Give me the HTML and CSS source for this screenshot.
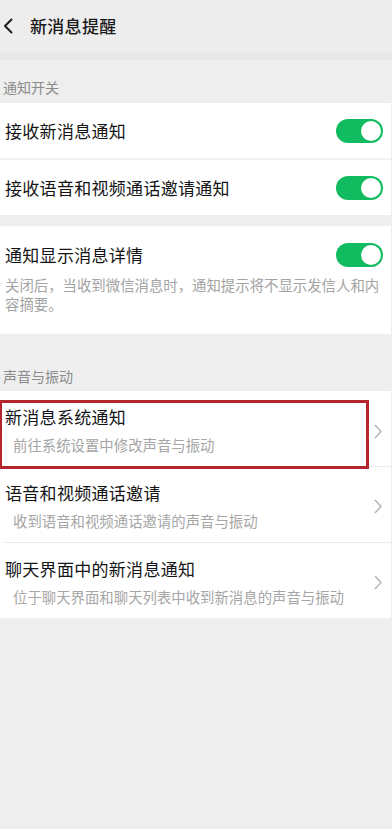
FILE: index.html
```html
<!DOCTYPE html>
<html lang="zh-CN">
<head>
<meta charset="utf-8">
<meta name="viewport" content="width=device-width, initial-scale=1">
<title>新消息提醒</title>
<link rel="stylesheet" href="styles.css">
</head>
<body>
<header class="topbar">
  <svg class="back" width="12" height="16" viewBox="0 0 12 16" aria-hidden="true"><path d="M9.5 1.5 L3 8 L9.5 14.5" fill="none" stroke="#1f1f1f" stroke-width="2" stroke-linecap="round" stroke-linejoin="round"/></svg>
  <h1 class="title">新消息提醒</h1>
</header>
<div class="band"></div>

<div class="section-label first">通知开关</div>
<section class="card">
  <div class="switch-row">
    <span class="row-title">接收新消息通知</span>
    <span class="toggle"><span class="knob"></span></span>
  </div>
  <div class="switch-row second">
    <span class="row-title">接收语音和视频通话邀请通知</span>
    <span class="toggle"><span class="knob"></span></span>
  </div>
</section>

<section class="card detail-card">
  <div class="detail-head">
    <span class="row-title">通知显示消息详情</span>
    <span class="toggle"><span class="knob"></span></span>
  </div>
  <p class="detail-desc">关闭后，当收到微信消息时，通知提示将不显示发信人和内容摘要。</p>
</section>

<div class="section-label second-label">声音与振动</div>
<section class="card nav-card">
  <div class="nav-row">
    <div class="nav-text">
      <div class="row-title">新消息系统通知</div>
      <div class="row-sub">前往系统设置中修改声音与振动</div>
    </div>
    <svg class="chev" width="8" height="15" viewBox="0 0 8 15" aria-hidden="true"><path d="M1 1 L7 7.5 L1 14" fill="none" stroke="#b3b3b3" stroke-width="1.4" stroke-linejoin="round"/></svg>
  </div>
  <div class="nav-row">
    <div class="nav-text">
      <div class="row-title">语音和视频通话邀请</div>
      <div class="row-sub">收到语音和视频通话邀请的声音与振动</div>
    </div>
    <svg class="chev" width="8" height="15" viewBox="0 0 8 15" aria-hidden="true"><path d="M1 1 L7 7.5 L1 14" fill="none" stroke="#b3b3b3" stroke-width="1.4" stroke-linejoin="round"/></svg>
  </div>
  <div class="nav-row">
    <div class="nav-text">
      <div class="row-title">聊天界面中的新消息通知</div>
      <div class="row-sub">位于聊天界面和聊天列表中收到新消息的声音与振动</div>
    </div>
    <svg class="chev" width="8" height="15" viewBox="0 0 8 15" aria-hidden="true"><path d="M1 1 L7 7.5 L1 14" fill="none" stroke="#b3b3b3" stroke-width="1.4" stroke-linejoin="round"/></svg>
  </div>
  <span class="highlight"></span>
</section>
</body>
</html>
```

FILE: styles.css
```css
* { box-sizing: border-box; }

html, body {
  margin: 0;
  padding: 0;
}

body {
  width: 392px;
  min-height: 829px;
  background: #eeeeee;
  font-family: "Noto Sans CJK SC", "Noto Sans", sans-serif;
  color: #141414;
}

.topbar {
  height: 52px;
  background: #ededed;
  display: flex;
  align-items: center;
  padding-left: 2px;
}

.back {
  display: block;
}

.title {
  margin: 0 0 0 16px;
  font-size: 17px;
  font-weight: 500;
  line-height: 24px;
  color: #1a1a1a;
  letter-spacing: 0.3px;
}

.band {
  height: 8px;
  background: #e8e8e8;
}

.section-label {
  font-size: 14px;
  line-height: 20px;
  color: #8c8c8c;
  padding-left: 3px;
}

.section-label.first {
  padding-top: 17px;
  padding-bottom: 6px;
}

.section-label.second-label {
  padding-top: 32px;
  padding-bottom: 5px;
}

.card {
  background: #ffffff;
  width: 391px;
}

.row-title {
  font-size: 17px;
  line-height: 24px;
  color: #141414;
  letter-spacing: 0.3px;
}

.switch-row {
  height: 55px;
  display: flex;
  align-items: center;
  justify-content: space-between;
  padding: 1px 8px 0 5px;
}

.switch-row.second {
  height: 57px;
  border-top: 2px solid #f2f2f2;
}

.toggle {
  width: 47px;
  height: 24px;
  border-radius: 12px;
  background: #10bc5f;
  display: flex;
  align-items: center;
  justify-content: flex-end;
  padding-right: 2px;
  flex: none;
}

.knob {
  width: 20px;
  height: 20px;
  border-radius: 50%;
  background: #ffffff;
}

.detail-card {
  margin-top: 11px;
  padding: 17px 8px 21px 5px;
}

.detail-head {
  display: flex;
  align-items: center;
  justify-content: space-between;
  height: 24px;
}

.detail-desc {
  margin: 8px 0 0;
  font-size: 14.4px;
  line-height: 19px;
  color: #a3a3a3;
}

.nav-card {
  position: relative;
  padding-left: 4px;
}

.nav-row {
  display: flex;
  align-items: center;
  justify-content: space-between;
  padding: 14px 9px 11px 1px;
  height: 75px;
}

.nav-row + .nav-row {
  border-top: 1px solid #ececec;
  height: 76px;
  padding-top: 13px;
}

.nav-row:last-child {
  height: 75px;
}

.nav-text {
  display: flex;
  flex-direction: column;
}

.row-sub {
  margin-top: 6px;
  padding-left: 8px;
  font-size: 14.4px;
  line-height: 20px;
  color: #a6a6a6;
}

.chev {
  display: block;
  flex: none;
  margin-top: 2px;
}

.highlight {
  position: absolute;
  left: -1px;
  top: 9px;
  width: 370px;
  height: 69px;
  border: 3px solid #b3262e;
  pointer-events: none;
}
```
